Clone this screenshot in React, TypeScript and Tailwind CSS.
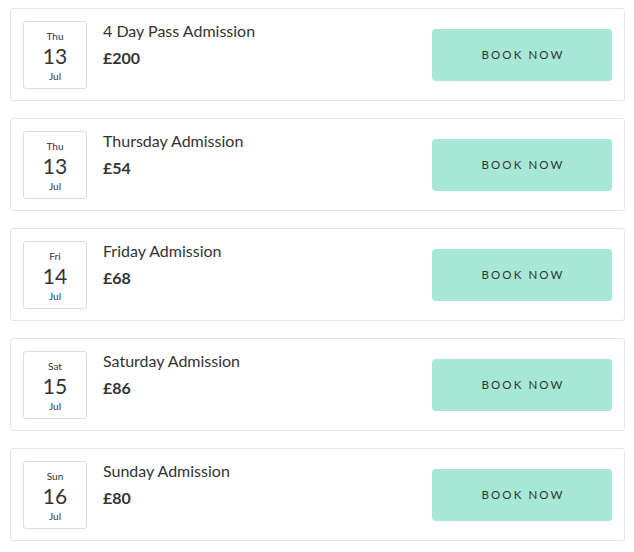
import React from "react";

const items = [
  { day: "Thu", date: "13", month: "Jul", title: "4 Day Pass Admission", price: "£200" },
  { day: "Thu", date: "13", month: "Jul", title: "Thursday Admission", price: "£54" },
  { day: "Fri", date: "14", month: "Jul", title: "Friday Admission", price: "£68" },
  { day: "Sat", date: "15", month: "Jul", title: "Saturday Admission", price: "£86" },
  { day: "Sun", date: "16", month: "Jul", title: "Sunday Admission", price: "£80" },
];

export default function App() {
  return (
    <div
      className="w-[634px] h-[552px] bg-white pt-[8px] pl-[10px] pr-[9px] flex flex-col gap-[17px] text-[#333]"
      style={{ fontFamily: "Lato, 'Liberation Sans', sans-serif" }}
    >
      {items.map((it, i) => (
        <div
          key={i}
          className="flex items-center justify-between border border-[#e6e6e6] rounded-[3px] p-3 h-[93px]"
        >
          <div className="flex items-start gap-4">
            <div className="w-[64px] h-[68px] border border-[#dcdcdc] rounded-[3px] flex flex-col items-center pt-[8px]">
              <div className="text-[10px] leading-[12px] text-[#333]">{it.day}</div>
              <div className="text-[21px] leading-[25px] text-[#333] mt-[1px]">{it.date}</div>
              <div className="text-[10px] leading-[12px] text-[#333] mt-[2px]">{it.month}</div>
            </div>
            <div className="flex flex-col">
              <div className="text-[16px] leading-[20px]">{it.title}</div>
              <div className="text-[16px] leading-[20px] font-bold mt-[7px]">{it.price}</div>
            </div>
          </div>
          <button className="w-[180px] h-[52px] bg-[#a6e7d5] rounded-[4px] text-[11.5px] tracking-[2.1px] text-[#333] pl-[2px]">
            BOOK NOW
          </button>
        </div>
      ))}
    </div>
  );
}
